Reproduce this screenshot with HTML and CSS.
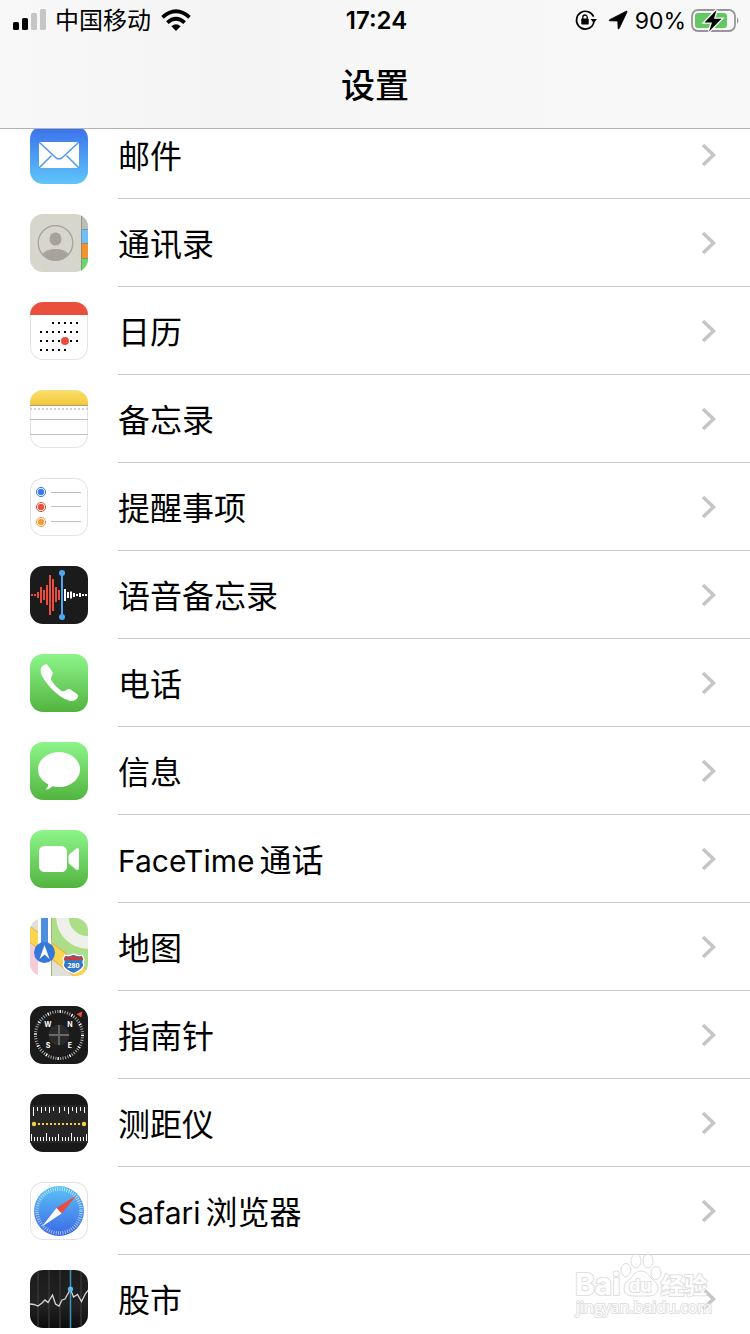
FILE: index.html
```html
<!DOCTYPE html>
<html lang="zh-CN">
<head>
<meta charset="utf-8">
<meta name="viewport" content="width=device-width, initial-scale=1">
<title>设置</title>
<link rel="stylesheet" href="styles.css">
</head>
<body>
<svg class="defs" aria-hidden="true">
  <defs>
    <linearGradient id="green" x2="0" y2="1"><stop offset="0" stop-color="#8df58a"/><stop offset="1" stop-color="#52b43f"/></linearGradient>
    <linearGradient id="mail" x2="0" y2="1"><stop offset="0" stop-color="#3a6fea"/><stop offset="1" stop-color="#5fc6fa"/></linearGradient>
    <linearGradient id="safari" x2="0" y2="1"><stop offset="0" stop-color="#5cc3f6"/><stop offset="1" stop-color="#3b68e6"/></linearGradient>
    <linearGradient id="note" x2="0" y2="1"><stop offset="0" stop-color="#fae070"/><stop offset="1" stop-color="#f5c937"/></linearGradient>
    <linearGradient id="stock" x2="0" y2="1"><stop offset="0" stop-color="#1b1b1b"/><stop offset=".6" stop-color="#222"/><stop offset="1" stop-color="#0c0c0c"/></linearGradient>
    <symbol id="chevron" viewBox="0 0 16 24"><path d="M2 2l10.500 10L2 22" fill="none" stroke="#c5c5c7" stroke-width="3.500"/></symbol>
  </defs>
</svg>

<header class="header">
  <div class="status">
    <div class="status-left">
      <svg class="signal" viewBox="0 0 34 22"><rect x="0" y="13" width="6" height="8" rx="1.500"/><rect x="9" y="9" width="6" height="12" rx="1.500"/><g fill="#c6c6c6"><rect x="18" y="4" width="6" height="17" rx="1.500"/><rect x="27" y="0" width="6" height="21" rx="1.500"/></g></svg>
      <span class="status-text">中国移动</span>
      <svg class="wifi" viewBox="0 0 30 22"><g fill="none" stroke="#000" stroke-width="3.800"><path d="M1.500 8.300Q15-3.800 28.500 8.300"/><path d="M6.400 13.600Q15 5.800 23.600 13.600"/></g><path d="M15 22l-4.600-4.800q4.600-3.800 9.200 0z"/></svg>
    </div>
    <time class="clock status-text">17:24</time>
    <div class="status-right">
      <svg class="lock" viewBox="0 0 22 22"><path d="M16.800 17.400A8.900 8.900 0 1 1 18.600 7.600M19 12q-.3 3-2.200 5.400" fill="none" stroke="#000" stroke-width="1.700"/><path d="M15.500 10h6.500l-3.200 4z"/><rect x="6.300" y="9.500" width="7.400" height="6" rx=".8"/><path d="M7.800 10V8.200a2.200 2.200 0 0 1 4.400 0V10" fill="none" stroke="#000" stroke-width="1.300"/></svg>
      <svg class="arrow" viewBox="0 0 20 20"><path d="M1.500 9.800L18.200 1.200q1.200-.4.800.8L11.200 18.500q-.9 1.100-1.100-.3L9.800 11 1.800 10.800q-1.200-.2-.3-1z" stroke="#000" stroke-width=".8"/></svg>
      <span class="status-text percent">90%</span>
      <svg class="battery" viewBox="0 0 49 24"><rect x="1" y="2" width="43" height="21" rx="6" fill="none" stroke="#979797" stroke-width="1.800"/><path d="M46 9q3 3.500 0 7z" fill="#979797"/><rect x="4" y="5" width="32" height="15" rx="3" fill="#64c766"/><path d="M25.500 2L13.500 14.500h7.500L18 23.500 30.500 10.800H23z" stroke="#f8f8f8" stroke-width="2.600" paint-order="stroke"/></svg>
    </div>
  </div>
  <h1 class="title">设置</h1>
</header>

<main class="scroller">
<ul class="list">
  <li><a class="row" href="#mail">
    <svg class="icon" viewBox="0 0 58 58"><rect width="58" height="58" fill="url(#mail)"/><path d="M9 16h40v26H9z" fill="#fff"/><path d="M9 16l16 15q4 4 8 0l16-15M9 42l12.500-12.500M49 42L36.500 29.500" fill="none" stroke="#4d98f1" stroke-width="1.500"/></svg>
    <span class="label"><span class="name">邮件</span><svg class="chevron"><use href="#chevron"/></svg></span></a></li>
  <li><a class="row" href="#contacts">
    <svg class="icon" viewBox="0 0 58 58"><rect width="58" height="58" fill="#d6d6cc"/><path d="M51 0h7v15h-7z" fill="#bdbdb3"/><path d="M51 15h7v14h-7z" fill="#70c2f5"/><path d="M51 29h7v15h-7z" fill="#f0962f"/><path d="M51 44h7v14h-7z" fill="#6dd66b"/><path d="M51.500 0v58M51 15.500h7M51 29.500h7M51 44.500h7" stroke="#777" opacity=".55"/><g fill="#a7a29b"><ellipse cx="25.500" cy="25" rx="6" ry="6.600"/><path d="M12.500 40q4-5 13-5t13 5q-5 6.500-13 6.500t-13-6.500z"/></g><circle cx="25.500" cy="29" r="17.300" fill="none" stroke="#a7a29b" stroke-width="1.300"/></svg>
    <span class="label"><span class="name">通讯录</span><svg class="chevron"><use href="#chevron"/></svg></span></a></li>
  <li><a class="row" href="#calendar">
    <svg class="icon outlined" viewBox="0 0 58 58"><path d="M0 0h58v13H0z" fill="#ea4e3d"/><g stroke="#000" stroke-width="2" stroke-dasharray="2 4"><path d="M22 21h26M10 30h38M10 39h38M10 48h26"/></g><circle cx="35" cy="39" r="4" fill="#eb4d3d"/></svg>
    <span class="label"><span class="name">日历</span><svg class="chevron"><use href="#chevron"/></svg></span></a></li>
  <li><a class="row" href="#notes">
    <svg class="icon outlined" viewBox="0 0 58 58"><path d="M0 0h58v15H0z" fill="url(#note)"/><path d="M0 15.500h58" stroke="#a79d79"/><path d="M0 19h58" stroke="#cfcfcf" stroke-width="2" stroke-dasharray="2 2"/><path d="M0 29.500h58M0 44.500h58" stroke="#bfbfc4"/></svg>
    <span class="label"><span class="name">备忘录</span><svg class="chevron"><use href="#chevron"/></svg></span></a></li>
  <li><a class="row" href="#reminders">
    <svg class="icon outlined" viewBox="0 0 58 58"><path d="M21 14.500h30M21 28.500h30M21 43.500h30" stroke="#bfbfc4"/><g fill="#3478f6" stroke="#3478f6"><circle cx="11" cy="14" r="2.800"/><circle cx="11" cy="14" r="4.600" fill="none"/></g><g fill="#eb4d3d" stroke="#eb4d3d"><circle cx="11" cy="29" r="2.800"/><circle cx="11" cy="29" r="4.600" fill="none"/></g><g fill="#f19a37" stroke="#f19a37"><circle cx="11" cy="44" r="2.800"/><circle cx="11" cy="44" r="4.600" fill="none"/></g></svg>
    <span class="label"><span class="name">提醒事项</span><svg class="chevron"><use href="#chevron"/></svg></span></a></li>
  <li><a class="row" href="#voice">
    <svg class="icon" viewBox="0 0 58 58"><rect width="58" height="58" fill="#1b1b1b"/><path d="M2 28v2M5 28v2M8 26v6M11 21v16M14 24v10M17 19v20M20 9v40M23 13v32M26 21v15M29 24v10" stroke="#eb4d3d" stroke-width="2"/><path d="M35 23v12M38 26v6M41 25.500v7M44 27v4M47 28v2M50 27v4M53 28v2M56 28v2" stroke="#fff" stroke-width="2"/><path d="M32 7v44" stroke="#4ea5f3" stroke-width="2"/><circle cx="32" cy="7" r="3" fill="#4ea5f3"/><circle cx="32" cy="51" r="3" fill="#4ea5f3"/></svg>
    <span class="label"><span class="name">语音备忘录</span><svg class="chevron"><use href="#chevron"/></svg></span></a></li>
  <li><a class="row" href="#phone">
    <svg class="icon" viewBox="0 0 58 58"><rect width="58" height="58" fill="url(#green)"/><path d="M12.200 12.200Q15 9.800 17 10.300L22.500 18Q23.400 19.700 22 21.600Q20.300 24 21.200 26.200Q25 32.500 31.500 37Q33.800 38 36 36.200Q38.300 34.500 40 35.200L47 40Q49 41.300 47.500 43.800Q44.500 48 39.500 46.800Q31.500 44.500 22.500 35.700Q12.500 25.500 10.800 18.500Q10.200 14.300 12.200 12.200z" fill="#fff"/></svg>
    <span class="label"><span class="name">电话</span><svg class="chevron"><use href="#chevron"/></svg></span></a></li>
  <li><a class="row" href="#messages">
    <svg class="icon" viewBox="0 0 58 58"><rect width="58" height="58" fill="url(#green)"/><path d="M29 10c11.600 0 21 7.800 21 17.500S40.600 45 29 45q-3.500 0-6.500-.7-3 3-7 3.400 2.700-2.500 2.900-5.400C12 39.200 8 33.800 8 27.500 8 17.800 17.400 10 29 10z" fill="#fff"/></svg>
    <span class="label"><span class="name">信息</span><svg class="chevron"><use href="#chevron"/></svg></span></a></li>
  <li><a class="row" href="#facetime">
    <svg class="icon" viewBox="0 0 58 58"><rect width="58" height="58" fill="url(#green)"/><rect x="9" y="16" width="28" height="26" rx="5.500" fill="#fff"/><path d="M38.500 26.500q0-1.500 1-2.300L46 18.700Q49 17 49 20v18q0 3-3 1.600l-6.500-5.500q-1-.8-1-2.300z" fill="#fff"/></svg>
    <span class="label"><span class="name"><span class="latin">FaceTime</span>通话</span><svg class="chevron"><use href="#chevron"/></svg></span></a></li>
  <li><a class="row" href="#maps">
    <svg class="icon" viewBox="0 0 58 58"><rect width="58" height="58" fill="#e0e0d8"/><path d="M21 0h37v58L21 25z" fill="#abde87"/><circle cx="58" cy="-1" r="25.500" fill="none" stroke="#f0f0ea" stroke-width="12.500"/><path d="M0 26l8 5v27H0z" fill="#f6cbd8"/><path d="M-3 14L60 62" stroke="#e9b04a" stroke-width="14"/><path d="M-3 14L60 62" stroke="#f9d550" stroke-width="12"/><path d="M8 0h13v58H8z" fill="#fff"/><path d="M21.500 0v22M21.500 42v16" stroke="#9fb77f"/><path d="M11 0h7v34h-7z" fill="#4b90de"/><circle cx="14.500" cy="34.500" r="10.500" fill="#3478d8"/><path d="M14.500 27l5 14-5-4.500-5 4.500z" fill="#fff"/><path d="M35 37q4 1.500 8.500-1 4.500 2.500 8.500 1l2 4q-2 3 0 6-1 5-10.500 8.500Q34 52 33 47q2-3 0-6z" fill="#3478c8" stroke="#fff" stroke-width="1.300"/><path d="M35 39q4 1 8.500-1 4.500 2 8.500 1l1.200 3H33.800z" fill="#d8372f"/><text class="shield" x="43.500" y="49.500" text-anchor="middle">280</text></svg>
    <span class="label"><span class="name">地图</span><svg class="chevron"><use href="#chevron"/></svg></span></a></li>
  <li><a class="row" href="#compass">
    <svg class="icon" viewBox="0 0 58 58"><rect width="58" height="58" fill="#1b1b1b"/><circle cx="29" cy="29" r="23.500" fill="none" stroke="#aaa" stroke-width="3" stroke-dasharray="1 1.461"/><circle cx="29" cy="29" r="23.500" fill="none" stroke="#fff" stroke-width="3" stroke-dasharray="1.200 11.105"/><circle cx="29" cy="29" r="10.500" fill="#2a2a2a"/><path d="M29 19v20M19 29h20" stroke="#6a6a6a" stroke-width="1.800"/><path d="M46.500 8l5.800-2.500-1 6z" fill="#eb4d3d"/><g class="points" text-anchor="middle"><text x="18" y="21">W</text><text x="40" y="21">N</text><text x="18" y="42">S</text><text x="40" y="42">E</text></g></svg>
    <span class="label"><span class="name">指南针</span><svg class="chevron"><use href="#chevron"/></svg></span></a></li>
  <li><a class="row" href="#measure">
    <svg class="icon" viewBox="0 0 58 58"><rect width="58" height="58" fill="#191919"/><path d="M0 11h58v38H0z" fill="#262626"/><path d="M3.500 13v9M7.500 13v4M11.500 13v6M15.500 13v4M19.500 13v6M23.500 13v4M29.500 13v6M34.500 13v4M38.500 13v7M42.500 13v4M46.500 13v6M50.500 13v4M54.500 13v6M1.500 40v7M4.500 43v4M7.500 43v4M10.500 43v4M13.500 43v4M16.500 39v8M19.500 43v4M22.500 43v4M25.500 43v4M28.500 40v7M32.500 43v4M35.500 43v4M38.500 43v4M41.500 39v8M44.500 43v4M47.500 43v4M50.500 43v4M53.500 43v4M56.500 40v7" stroke="#fff"/><path d="M8 30h42" stroke="#f7ce46" stroke-width="2" stroke-dasharray="2 2"/><circle cx="4" cy="30" r="2.200" fill="#f7ce46"/><circle cx="54" cy="30" r="2.200" fill="#f7ce46"/></svg>
    <span class="label"><span class="name">测距仪</span><svg class="chevron"><use href="#chevron"/></svg></span></a></li>
  <li><a class="row" href="#safari">
    <svg class="icon outlined" viewBox="0 0 58 58"><circle cx="29" cy="29" r="25" fill="url(#safari)"/><circle cx="29" cy="29" r="22" fill="none" stroke="#fff" stroke-width="3.500" stroke-dasharray=".7 1.604" opacity=".75"/><path d="M47 13L26.500 26l5 5.500z" fill="#eb4d3d"/><path d="M12 44.500L26.500 26l5 5.500z" fill="#fff"/></svg>
    <span class="label"><span class="name"><span class="latin">Safari</span>浏览器</span><svg class="chevron"><use href="#chevron"/></svg></span></a></li>
  <li><a class="row" href="#stocks">
    <svg class="icon" viewBox="0 0 58 58"><rect width="58" height="58" fill="url(#stock)"/><path d="M8 0v58M19 0v58M30 0v58M51 0v58" stroke="#353535" stroke-width="1.500"/><path d="M40.500 0v58" stroke="#3d93bd" stroke-width="1.500"/><path d="M0 34l4 .5 4 1.500 4-3 3-3 3 2.500 4.500-7.500 3 9 3.500 2 3-6 3-1 5.500-10 3 8 4-2.500 4 7 4-8 3-3.500" fill="none" stroke="#d5d5d5" stroke-width="1.300"/><circle cx="40.500" cy="19" r="2.600" fill="#55bdf0"/></svg>
    <span class="label"><span class="name">股市</span><svg class="chevron"><use href="#chevron"/></svg></span></a></li>
</ul>
</main>

<svg class="watermark" viewBox="0 0 190 94" role="img" aria-label="Baidu 经验">
  <g fill="#fff" stroke="#d4d4d4">
    <ellipse cx="66" cy="30" rx="5" ry="6.500"/><ellipse cx="76" cy="21" rx="5" ry="7"/><ellipse cx="88" cy="21" rx="5" ry="7"/><ellipse cx="96" cy="33" rx="5" ry="6.500"/>
    <path d="M81 31q6 0 10 7 8 6 7 12-2 6-9 6H73q-9 0-9-7 0-6 7-11 4-7 10-7z"/>
  </g>
  <g class="mark-text"><text class="mark-large" x="15" y="55">Bai</text><text class="mark-du" x="69" y="52">du</text><text class="mark-cn" x="101" y="54">经验</text><text class="mark-url" x="16" y="73">jingyan.baidu.com</text></g>
</svg>
</body>
</html>
```
FILE: styles.css
```css
* {
  box-sizing: border-box;
}

body {
  margin: 0;
  height: 100vh;
  display: flex;
  flex-direction: column;
  overflow: hidden;
  position: relative;
  background: #fff;
  color: #000;
  font-family: Inter, "Noto Sans CJK SC", sans-serif;
}

svg {
  display: block;
  flex: none;
}

.defs {
  position: absolute;
  width: 0;
  height: 0;
}

.header {
  flex: none;
  background: linear-gradient(90deg, #f8f8f8, #f4f4f4 33%, #f7f7f7 50%, #f8f8f8);
  border-bottom: 1px solid #b2b2b2;
}

.status {
  height: 40px;
  padding: 0 10px 0 13px;
  display: grid;
  grid-template-columns: 1fr auto 1fr;
  align-items: center;
  font-size: 24px;
  line-height: 36px;
}

.status-text {
  padding-top: 2px;
}

.status-left,
.status-right {
  display: flex;
  align-items: center;
}

.status-left {
  gap: 8px;
}

.status-right {
  justify-content: flex-end;
  gap: 5px;
}

.clock {
  font-weight: 600;
}

.percent {
  font-size: 23px;
}

.signal {
  width: 34px;
  height: 22px;
}

.wifi {
  width: 30px;
  height: 22px;
  margin-left: 2px;
}

.lock {
  width: 22px;
  height: 22px;
}

.arrow {
  width: 20px;
  height: 20px;
  margin: 0 2px 0 6px;
}

.battery {
  width: 49px;
  height: 24px;
}

.title {
  margin: 0;
  padding-top: 4px;
  font-size: 34px;
  font-weight: 500;
  line-height: 84px;
  text-align: center;
}

.scroller {
  flex: 1;
  min-height: 0;
  overflow: hidden auto;
  scrollbar-width: none;
}

.list {
  margin: -18px 0 0;
  padding: 0;
  list-style: none;
}

.row {
  display: flex;
  align-items: center;
  gap: 30px;
  height: 88px;
  padding-left: 30px;
  color: inherit;
  text-decoration: none;
}

.icon {
  width: 58px;
  height: 58px;
  border-radius: 13px;
}

.outlined {
  background: #fff;
  box-shadow: inset 0 0 0 1px #e3e3e5;
}

.label {
  flex: 1;
  height: 88px;
  padding-right: 33px;
  display: flex;
  align-items: center;
  justify-content: space-between;
  border-bottom: 1px solid #c6c6c8;
  font-size: 32px;
  line-height: 40px;
}

.name {
  padding-top: 4px;
}

.latin {
  margin-right: 5px;
  font-size: 30px;
}

.chevron {
  width: 16px;
  height: 24px;
}

.shield {
  font: 700 7px "Open Sans", sans-serif;
  fill: #fff;
}

.points {
  font: 700 7px Inter, sans-serif;
  fill: #fff;
}

.watermark {
  position: absolute;
  right: 0;
  bottom: 0;
  width: 190px;
  height: 94px;
  opacity: 0.8;
  pointer-events: none;
}

.mark-text {
  fill: #fff;
  stroke: #d8d8d8;
  stroke-width: 2px;
  paint-order: stroke;
  font-family: Inter, "Noto Sans CJK SC", sans-serif;
  font-weight: 700;
}

.mark-large {
  font-size: 30px;
}

.mark-du {
  font-size: 18px;
}

.mark-cn {
  font-size: 23px;
}

.mark-url {
  font-family: "Open Sans", sans-serif;
  font-size: 16px;
  font-weight: 400;
}
```
